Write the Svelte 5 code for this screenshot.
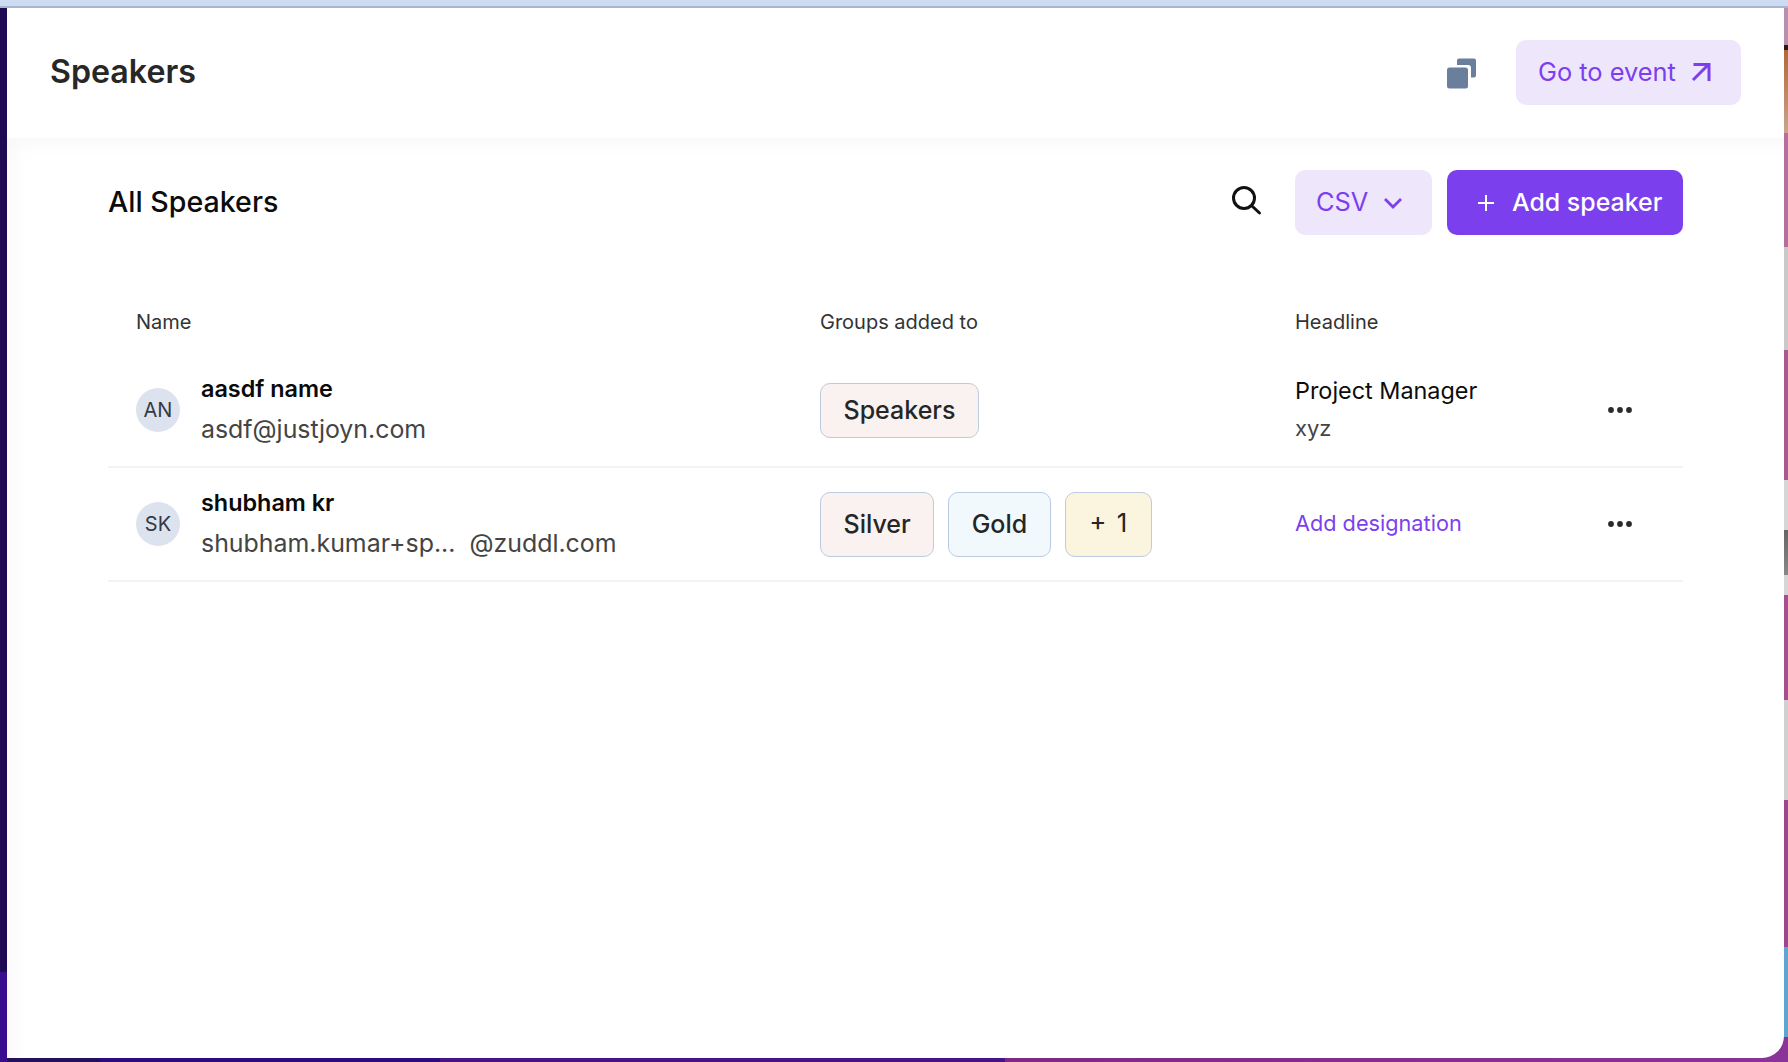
<script>
  const speakers = [
    {
      initials: 'AN',
      name: 'aasdf name',
      email: 'asdf@justjoyn.com',
      groups: [{ label: 'Speakers', tone: 'rose' }],
      headline: 'Project Manager',
      company: 'xyz'
    },
    {
      initials: 'SK',
      name: 'shubham kr',
      email: 'shubham.kumar+sp...',
      domain: '@zuddl.com',
      groups: [
        { label: 'Silver', tone: 'rose' },
        { label: 'Gold', tone: 'sky' },
        { label: '+ 1', tone: 'sand' }
      ]
    }
  ];
</script>

<div class="desktop">
  <div class="topstrip"></div>
  <div class="window">
    <header class="pagebar">
      <h1>Speakers</h1>
      <div class="pagebar-actions">
        <svg class="copy" width="32" height="32" viewBox="0 0 32 32" aria-hidden="true">
          <path d="M11 2.5a2 2 0 0 1 2-2h15a2 2 0 0 1 2 2v15a2 2 0 0 1-2 2h-3V10a3 3 0 0 0-3-3H11z" fill="#6a7f9b" />
          <rect x="1" y="9.5" width="21" height="21" rx="2.5" fill="#6a7f9b" />
        </svg>
        <button class="btn soft">
          <span class="label">Go to event</span>
          <svg width="20" height="20" viewBox="0 0 20 20" fill="none" stroke="#7c3fee" stroke-width="3" aria-hidden="true">
            <path d="M2 18 17.5 2.5M2.5 2.5h15.5V19" />
          </svg>
        </button>
      </div>
    </header>

    <main class="content">
      <div class="toolbar">
        <h2>All Speakers</h2>
        <svg class="search" width="32" height="32" viewBox="0 0 32 32" fill="none" stroke="#111" stroke-width="3" stroke-linecap="round" aria-hidden="true">
          <circle cx="14" cy="14" r="10.5" />
          <path d="m22 22 7.5 7" />
        </svg>
        <button class="btn soft csv">
          <span class="label">CSV</span>
          <svg width="20" height="12" viewBox="0 0 20 12" fill="none" stroke="#7c3fee" stroke-width="2.8" aria-hidden="true">
            <path d="m2 2 8 8 8-8" />
          </svg>
        </button>
        <button class="btn solid">
          <svg width="16" height="16" viewBox="0 0 16 16" stroke="#fff" stroke-width="2" aria-hidden="true">
            <path d="M8 0v16M0 8h16" />
          </svg>
          <span class="label">Add speaker</span>
        </button>
      </div>

      <div class="row head">
        <div>Name</div>
        <div>Groups added to</div>
        <div>Headline</div>
      </div>

      {#each speakers as s}
        <div class="row item">
          <div class="person">
            <span class="avatar">{s.initials}</span>
            <div class="who">
              <div class="name">{s.name}</div>
              <div class="email">
                <span>{s.email}</span>
                {#if s.domain}<span>{s.domain}</span>{/if}
              </div>
            </div>
          </div>
          <div class="groups">
            {#each s.groups as g}
              <span class="chip {g.tone}" class:tall={s.groups.length > 1}>{g.label}</span>
            {/each}
          </div>
          <div class="headline">
            {#if s.headline}
              <div class="title">{s.headline}</div>
              <div class="company">{s.company}</div>
            {:else}
              <span class="add">Add designation</span>
            {/if}
          </div>
          <svg class="more" width="24" height="6" viewBox="0 0 24 6" fill="#2b2b2b" aria-hidden="true">
            <circle cx="3" cy="3" r="2.9" />
            <circle cx="12" cy="3" r="2.9" />
            <circle cx="21" cy="3" r="2.9" />
          </svg>
        </div>
      {/each}
    </main>
  </div>
</div>

<style>
  :global(body) {
    margin: 0;
    font-family: Inter, "Liberation Sans", sans-serif;
  }

  .desktop {
    box-sizing: border-box;
    width: 1788px;
    height: 1062px;
    overflow: hidden;
    display: flex;
    flex-direction: column;
    padding-bottom: 4px;
    background-color: #8a3398;
    background-repeat: no-repeat;
    /* wallpaper and other windows peeking out around the edges */
    background-image:
      linear-gradient(to bottom, #200b52 972px, #3a0d8f 972px),
      linear-gradient(to right, #25105c 0, #25105c 100px, #2e0a80 100px, #2e0a80 440px, #4a1385 440px, #4a1385 1005px, #7d2a80 1005px, #8a3398 100%),
      linear-gradient(to bottom,
        #b98fb0 45px, #2a1a18 45px, #2a1a18 50px, #b0683a 50px, #c9a58c 133px,
        #b56f9f 133px, #b56f9f 247px, #c9c9c9 247px, #c9c9c9 350px,
        #a85a90 350px, #a85a90 480px, #d6d6d6 480px, #d6d6d6 530px,
        #666 530px, #888 575px, #d6d6d6 575px, #d6d6d6 595px,
        #a34f90 595px, #a34f90 700px, #d0d0d0 700px, #d0d0d0 800px,
        #9a4690 800px, #9a4690 947px, #5fa5cf 947px, #5fa5cf 1037px, #8a3398 1037px);
    background-size: 7px 100%, 100% 4px, 4px 100%;
    background-position: left top, left bottom, right top;
  }

  .topstrip {
    flex: none;
    height: 6px;
    background: #cddcf3;
    border-bottom: 2px solid #a9b6d1;
  }

  .window {
    flex: 1;
    min-height: 0;
    margin: 0 4px 0 7px;
    background: #fff;
    border-bottom-right-radius: 22px;
    overflow: hidden;
    color: #111;
  }

  .pagebar {
    box-sizing: border-box;
    height: 130px;
    display: flex;
    align-items: center;
    justify-content: space-between;
    padding: 0 43px 2px 43px;
  }

  h1 {
    margin: 0 0 2px;
    font-size: 32.2px;
    font-weight: 600;
    color: #272727;
  }

  .pagebar-actions {
    display: flex;
    align-items: center;
    gap: 38px;
  }

  .copy {
    margin-top: 3px;
  }

  .btn {
    box-sizing: border-box;
    height: 65px;
    display: inline-flex;
    align-items: center;
    border: 0;
    border-radius: 10px;
    font-family: inherit;
    font-size: 25.4px;
    font-weight: 400;
  }

  .label {
    margin-bottom: 2px;
  }

  .soft {
    gap: 15px;
    width: 225px;
    padding: 0 22px;
    background: #eee6fb;
    color: #7c3fee;
  }

  .soft.csv {
    width: 137px;
    padding-left: 21px;
  }

  .solid {
    gap: 18px;
    width: 236px;
    padding: 0 0 0 31px;
    background: #7c3fee;
    color: #fff;
    font-size: 24.9px;
    font-weight: 500;
  }

  .content {
    box-sizing: border-box;
    height: 925px;
    padding: 32px 101px 0 101px;
    box-shadow: inset 18px 18px 22px -14px rgba(30, 30, 60, 0.035);
  }

  .toolbar {
    display: flex;
    align-items: center;
    gap: 15px;
  }

  .toolbar h2 {
    flex: 1;
    margin: 0 0 2px;
    font-size: 28.6px;
    font-weight: 500;
    color: #0c0c0c;
  }

  .search {
    margin: 0 18px 5px 0;
  }

  .row {
    display: grid;
    grid-template-columns: 684px 475px 1fr 24px;
    align-items: center;
    padding: 0 51px 0 28px;
  }

  .head {
    margin-top: 74px;
    height: 26px;
    font-size: 20px;
    color: #333;
  }

  .item {
    height: 114px;
    border-bottom: 2px solid #f0f3f8;
    box-sizing: border-box;
  }

  .head + .item {
    margin-top: 19px;
  }

  .person {
    display: flex;
    align-items: center;
    gap: 21px;
  }

  .avatar {
    width: 44px;
    height: 44px;
    border-radius: 50%;
    display: flex;
    align-items: center;
    justify-content: center;
    background: #dde3ee;
    color: #333a45;
    font-size: 20px;
  }

  .who {
    display: flex;
    flex-direction: column;
    gap: 8px;
    margin-top: -2px;
  }

  .name {
    font-size: 23.4px;
    font-weight: 600;
    line-height: 32px;
    color: #0a0a0a;
  }

  .email {
    display: flex;
    gap: 14px;
    font-size: 24.9px;
    line-height: 32px;
    color: #444;
  }

  .groups {
    display: flex;
    gap: 14px;
  }

  .chip {
    box-sizing: border-box;
    height: 55px;
    padding: 0 22.5px;
    display: flex;
    align-items: center;
    border: 1px solid #bccbdf;
    border-radius: 10px;
    font-size: 25px;
    font-weight: 500;
    color: #262626;
  }

  .chip.tall {
    height: 65px;
  }

  .rose {
    background: #f9f2f0;
  }

  .sky {
    background: #f1f9fd;
  }

  .chip.sand {
    width: 87px;
    justify-content: center;
    padding: 0 0 3px;
    background: #fbf4df;
    font-size: 26px;
    font-weight: 400;
    word-spacing: 3px;
  }

  .headline {
    margin-top: -2px;
  }

  .title {
    font-size: 23.4px;
    line-height: 32px;
    color: #0c0c0c;
  }

  .company {
    margin-top: 6px;
    font-size: 22px;
    line-height: 30px;
    color: #444;
  }

  .add {
    font-size: 21.7px;
    color: #7c3fee;
  }
</style>
